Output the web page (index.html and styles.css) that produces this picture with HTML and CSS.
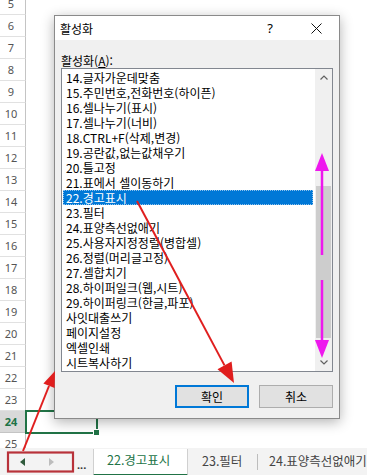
FILE: index.html
```html
<!DOCTYPE html>
<html lang="ko">
<head>
    <meta charset="UTF-8">
    <meta name="viewport" content="width=device-width, initial-scale=1.0">
    <title>활성화</title>
    <link rel="stylesheet" href="styles.css">
</head>
<body>

    <div class="sheet">
        <div class="rows">
            <div class="row"><div class="rh">5</div></div>
            <div class="row"><div class="rh">6</div></div>
            <div class="row"><div class="rh">7</div></div>
            <div class="row"><div class="rh">8</div></div>
            <div class="row"><div class="rh">9</div></div>
            <div class="row"><div class="rh">10</div></div>
            <div class="row"><div class="rh">11</div></div>
            <div class="row"><div class="rh">12</div></div>
            <div class="row"><div class="rh">13</div></div>
            <div class="row"><div class="rh">14</div></div>
            <div class="row"><div class="rh">15</div></div>
            <div class="row"><div class="rh">16</div></div>
            <div class="row"><div class="rh">17</div></div>
            <div class="row"><div class="rh">18</div></div>
            <div class="row"><div class="rh">19</div></div>
            <div class="row"><div class="rh">20</div></div>
            <div class="row"><div class="rh">21</div></div>
            <div class="row"><div class="rh">22</div></div>
            <div class="row"><div class="rh">23</div></div>
            <div class="row current"><div class="rh">24</div><div class="sel"></div></div>
            <div class="row"><div class="rh">25</div></div>
        </div>
    </div>

    <div class="tabs">
        <div class="nav">
            <svg width="6" height="8" viewBox="0 0 6 8"><polygon points="5,0 5,8 0,4" fill="#2f5a3c"/></svg>
            <svg width="6" height="8" viewBox="0 0 6 8"><polygon points="1,0 1,8 6,4" fill="#bdbdbd"/></svg>
        </div>
        <span class="more">...</span>
        <div class="tab active">22.경고표시</div>
        <div class="tab">23.필터</div>
        <span class="sep"></span>
        <div class="tab last">24.표양측선없애기</div>
    </div>

    <div class="dialog">
        <div class="titlebar">
            <span class="title">활성화</span>
            <span class="help">?</span>
            <span class="close">
                <svg width="11" height="11" viewBox="0 0 11 11"><path d="M0.5 0.5 L10.5 10.5 M10.5 0.5 L0.5 10.5" stroke="#111" stroke-width="1"/></svg>
            </span>
        </div>
        <div class="body">
            <div class="label">활성화(<u>A</u>):</div>
            <div class="listbox">
                <div class="items">
                    <div class="item">14.글자가운데맞춤</div>
                    <div class="item">15.주민번호,전화번호(하이픈)</div>
                    <div class="item">16.셀나누기(표시)</div>
                    <div class="item">17.셀나누기(너비)</div>
                    <div class="item">18.CTRL+F(삭제,변경)</div>
                    <div class="item">19.공란값,없는값채우기</div>
                    <div class="item">20.틀고정</div>
                    <div class="item">21.표에서 셀이동하기</div>
                    <div class="item selected">22.경고표시</div>
                    <div class="item">23.필터</div>
                    <div class="item">24.표양측선없애기</div>
                    <div class="item">25.사용자지정정렬(병합셀)</div>
                    <div class="item">26.정렬(머리글고정)</div>
                    <div class="item">27.셀합치기</div>
                    <div class="item">28.하이퍼일크(웹,시트)</div>
                    <div class="item">29.하이퍼링크(한글,파포)</div>
                    <div class="item">사잇대출쓰기</div>
                    <div class="item">페이지설정</div>
                    <div class="item">엑셀인쇄</div>
                    <div class="item">시트복사하기</div>
                </div>
                <div class="scroll">
                    <div class="arrow">
                        <svg width="8" height="5" viewBox="0 0 8 5"><polyline points="0.5,4.5 4,1 7.5,4.5" fill="none" stroke="#606060" stroke-width="1.2"/></svg>
                    </div>
                    <div class="track"><div class="thumb"></div></div>
                    <div class="arrow">
                        <svg width="8" height="5" viewBox="0 0 8 5"><polyline points="0.5,0.5 4,4 7.5,0.5" fill="none" stroke="#606060" stroke-width="1.2"/></svg>
                    </div>
                </div>
            </div>
            <div class="buttons">
                <button class="btn default">확인</button>
                <button class="btn">취소</button>
            </div>
        </div>
    </div>

    <!-- annotations drawn over the screenshot -->
    <svg class="marks" width="367" height="475" viewBox="0 0 367 475">
        <rect x="8" y="452.5" width="65" height="19" fill="none" stroke="#b8323a" stroke-width="2.2"/>
        <line x1="23" y1="451" x2="49" y2="386" stroke="#e01e1e" stroke-width="2"/>
        <polygon points="55,371 54.6,388.1 43.4,383.6" fill="#e01e1e"/>
        <line x1="137" y1="201" x2="224.5" y2="365.4" stroke="#e01e1e" stroke-width="2"/>
        <polygon points="234,383 217.5,369.2 231.6,361.6" fill="#e01e1e"/>
        <line x1="322" y1="170" x2="322" y2="255" stroke="#ee18ee" stroke-width="2.5"/>
        <polygon points="322,153 315,171 329,171" fill="#ee18ee"/>
        <line x1="322" y1="280" x2="322" y2="341" stroke="#ee18ee" stroke-width="2.5"/>
        <polygon points="315,340 329,340 322,358" fill="#ee18ee"/>
    </svg>

</body>
</html>
```

FILE: styles.css
```css
body {
    margin: 0;
    width: 367px;
    height: 475px;
    overflow: hidden;
    position: relative;
    background: #fff;
    font-family: "Noto Sans CJK KR", "Noto Sans", sans-serif;
    color: #000;
}

.sheet {
    height: 448px;
    overflow: hidden;
}

.rows {
    margin-top: -7px;
}

.row {
    display: flex;
    height: 22px;
}

.rh {
    width: 26px;
    box-sizing: border-box;
    border-right: 1px solid #c4c4c4;
    border-bottom: 1px solid #e1e1e1;
    font-family: "Noto Sans", sans-serif;
    font-size: 11px;
    line-height: 21px;
    text-align: center;
    padding-right: 3px;
    color: #555;
}

.row.current .rh {
    background: #d9d9d9;
    color: #217346;
    font-weight: bold;
    border-bottom-color: #c4c4c4;
}

.sel {
    width: 73px;
    height: 24px;
    box-sizing: border-box;
    margin: -1px 0 0 -1px;
    border: 2px solid #217346;
    position: relative;
}

.sel::after {
    content: "";
    position: absolute;
    right: -4px;
    bottom: -4px;
    width: 5px;
    height: 5px;
    background: #217346;
    border: 1px solid #fff;
}

.tabs {
    height: 27px;
    display: flex;
    align-items: center;
    background: #f3f3f3;
    font-size: 12.5px;
    color: #444;
}

.nav {
    width: 74px;
    display: flex;
    align-items: center;
    padding-left: 20px;
    box-sizing: border-box;
    gap: 22px;
}

.more {
    width: 19px;
    padding-left: 3px;
    box-sizing: border-box;
    font-family: "Noto Sans", sans-serif;
    font-weight: bold;
    font-size: 11px;
    color: #333;
    padding-top: 6px;
}

.tab {
    height: 27px;
    line-height: 26px;
    padding-left: 14px;
    box-sizing: border-box;
    white-space: nowrap;
}

.tab.active {
    width: 95px;
    background: #fff;
    color: #217346;
    border-left: 1px solid #d0d0d0;
    border-right: 1px solid #d0d0d0;
    border-bottom: 2px solid #217346;
    margin-top: 2px;
    line-height: 22px;
    padding-left: 13px;
}

.tab:nth-child(4) {
    width: 69px;
}

.sep {
    width: 1px;
    height: 16px;
    background: #bdbdbd;
}

.tab.last {
    padding-left: 11px;
}

/* dialog */

.dialog {
    position: absolute;
    left: 54px;
    top: 15px;
    width: 286px;
    height: 404px;
    box-sizing: border-box;
    border: 1px solid #8a8a8a;
    box-shadow: 0 3px 12px rgba(0, 0, 0, 0.3);
    display: flex;
    flex-direction: column;
    font-size: 12px;
}

.titlebar {
    height: 24px;
    background: #fff;
    display: flex;
    align-items: center;
    padding-left: 5px;
}

.title {
    line-height: 15px;
    flex: 1;
}

.help {
    width: 46px;
    text-align: center;
    font-family: "Noto Sans", sans-serif;
    font-size: 13px;
}

.close {
    width: 46px;
    display: flex;
    justify-content: center;
}

.body {
    flex: 1;
    background: #f0f0f0;
    padding: 13px 6px 0 6px;
}

.label {
    line-height: 15px;
}

.listbox {
    width: 272px;
    height: 304px;
    box-sizing: border-box;
    border: 1px solid #828790;
    background: #fff;
    display: flex;
}

.items {
    flex: 1;
    padding-top: 1px;
    overflow: hidden;
}

.item {
    height: 15px;
    line-height: 15px;
    padding-left: 3px;
    margin: 0 2px 0 1px;
    white-space: nowrap;
}

.item.selected {
    background: #0078d7;
    color: #fff;
    outline: 1px dotted #8fc2ec;
    outline-offset: -1px;
}

.scroll {
    width: 17px;
    background: #f0f0f0;
    display: flex;
    flex-direction: column;
}

.arrow {
    height: 17px;
    display: flex;
    align-items: center;
    justify-content: center;
}

.track {
    flex: 1;
    padding-top: 100px;
}

.thumb {
    height: 152px;
    margin: 0 1px;
    background: #cdcdcd;
}

.buttons {
    margin-top: 13px;
    display: flex;
    justify-content: flex-end;
    gap: 10px;
}

.btn {
    width: 74px;
    height: 23px;
    box-sizing: border-box;
    border: 1px solid #adadad;
    background: #e1e1e1;
    font-family: "Noto Sans CJK KR", sans-serif;
    font-size: 12px;
    padding: 0;
    color: #000;
}

.btn.default {
    border: 2px solid #0078d7;
}

.marks {
    position: absolute;
    left: 0;
    top: 0;
}
```
